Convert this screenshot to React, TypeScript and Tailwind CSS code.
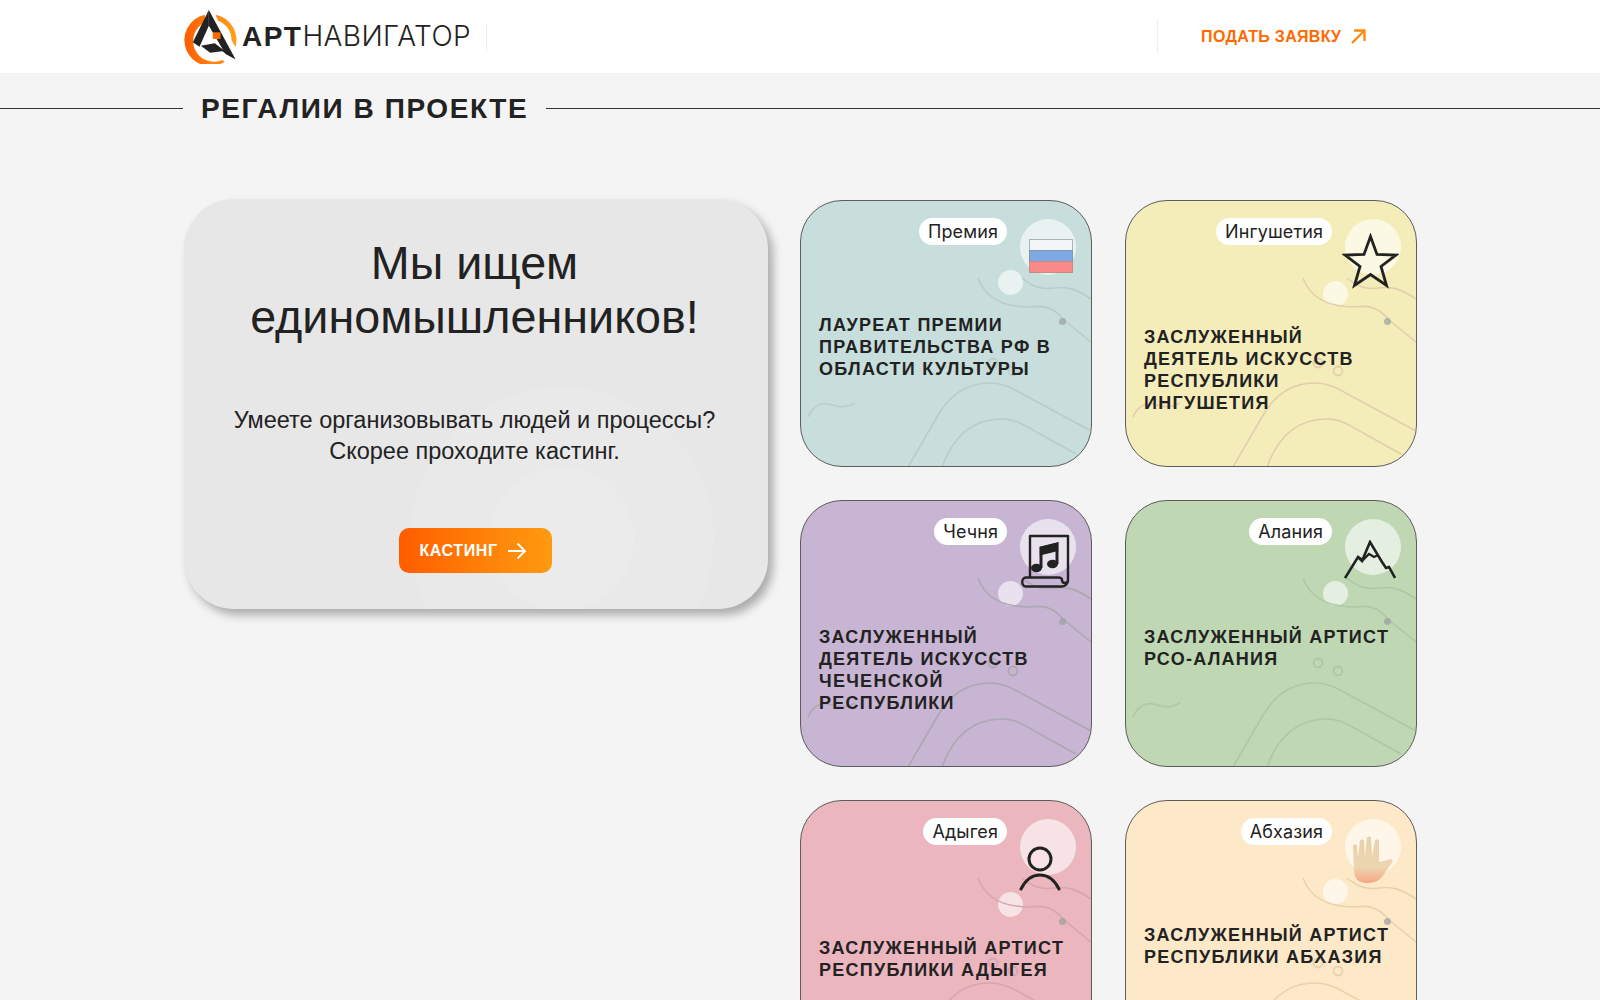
import type { ReactNode } from 'react'

type Regalia = {
  tag: string
  title: string
  bg: string
  line: string
  titleGap: string
  dotTop: string
  icon: ReactNode
}

function FlagIcon() {
  return (
    <svg className="absolute left-[228px] top-[38px]" width="44" height="34" viewBox="0 0 44 34">
      <rect x="0.5" y="0.5" width="43" height="11" fill="#f2f6f8" stroke="#a9b5b5" />
      <rect x="0.5" y="11.5" width="43" height="11" fill="#7fa9e4" stroke="#8296a8" />
      <rect x="0.5" y="22.5" width="43" height="11" fill="#f78a88" stroke="#c98a80" />
    </svg>
  )
}

function StarIcon() {
  return (
    <svg className="absolute left-[216px] top-[32px]" width="57" height="56" viewBox="0 0 57 56" fill="none">
      <path d="M28.5 3.5 L35 21.5 L54 22 L39 33.5 L44.5 52.5 L28.5 41.5 L12.5 52.5 L18 33.5 L3 22 L22 21.5 Z" stroke="#222" strokeWidth="2.8" strokeLinejoin="miter" />
    </svg>
  )
}

function ScoreIcon() {
  return (
    <svg className="absolute left-[220px] top-[33px]" width="50" height="54" viewBox="0 0 50 54" fill="none" stroke="#222" strokeWidth="2.4">
      <path d="M9 44 V2 H47 V46 C47 50 41 50 41 46 C41 44 39 43.5 37 43.5 H5 C0 43.5 0 52.5 5 52.5 H41 C44 52.5 47 50 47 46" strokeLinejoin="round" />
      <path d="M20 34 V14 L36 10 V30" strokeWidth="3" />
      <path d="M20 14 L36 10 V16 L20 20 Z" fill="#222" />
      <ellipse cx="15.5" cy="34" rx="5.5" ry="4.2" fill="#222" stroke="none" />
      <ellipse cx="31.5" cy="30" rx="5.5" ry="4.2" fill="#222" stroke="none" />
    </svg>
  )
}

function MountainIcon() {
  return (
    <svg className="absolute left-[218px] top-[39px]" width="52" height="40" viewBox="0 0 52 40" fill="none" stroke="#222" strokeWidth="2.6" strokeLinejoin="miter">
      <path d="M1 38 L14 17 L18 21 L26 2 L38 22 L42 28 L45 27 L51 38" />
      <path d="M14 17 L19 20 L25 14 L30 17 L34 15" strokeWidth="2.2" />
    </svg>
  )
}

function PersonIcon() {
  return (
    <svg className="absolute left-[218px] top-[45px]" width="44" height="46" viewBox="0 0 44 46" fill="none" stroke="#222" strokeWidth="3" strokeLinecap="round">
      <circle cx="21" cy="13" r="11" />
      <path d="M2 43 C8 31 15 29 21 29 C27 29 34 31 40 43" />
    </svg>
  )
}

function HandIcon() {
  return (
    <svg className="absolute left-[226px] top-[35px]" width="42" height="48" viewBox="0 0 42 48">
      <defs>
        <linearGradient id="palm" x1="0" y1="0" x2="0" y2="1">
          <stop offset="0" stopColor="#e8d2ab" />
          <stop offset="0.65" stopColor="#ecd6b2" />
          <stop offset="1" stopColor="#f8a585" />
        </linearGradient>
      </defs>
      <path
        d="M1 10 C1 8 5 8 5 10 L6 21 L8 5 C8 3 12 3 12 5 L13 20 L15 2 C15 0 19 0 19 2 L20 20 L23 5 C23 3 27 3 27 5 L27 26 L36 24 C41 22 42 25 39 28 L32 38 C28 45 22 47 15 47 C6 47 2 42 2 34 Z"
        fill="url(#palm)"
      />
    </svg>
  )
}

const items: Regalia[] = [
  { tag: 'Премия', title: 'ЛАУРЕАТ ПРЕМИИ\nПРАВИТЕЛЬСТВА РФ В\nОБЛАСТИ КУЛЬТУРЫ', bg: 'bg-[#c7dedc]', line: '#bccbc8', titleGap: 'mt-[69px]', dotTop: 'top-[69px]', icon: <FlagIcon /> },
  { tag: 'Ингушетия', title: 'ЗАСЛУЖЕННЫЙ\nДЕЯТЕЛЬ ИСКУССТВ\nРЕСПУБЛИКИ\nИНГУШЕТИЯ', bg: 'bg-[#f4edb9]', line: '#e2ceae', titleGap: 'mt-[81px]', dotTop: 'top-[80px]', icon: <StarIcon /> },
  { tag: 'Чечня', title: 'ЗАСЛУЖЕННЫЙ\nДЕЯТЕЛЬ ИСКУССТВ\nЧЕЧЕНСКОЙ\nРЕСПУБЛИКИ', bg: 'bg-[#c8b5d3]', line: '#aea6b0', titleGap: 'mt-[81px]', dotTop: 'top-[80px]', icon: <ScoreIcon /> },
  { tag: 'Алания', title: 'ЗАСЛУЖЕННЫЙ АРТИСТ\nРСО-АЛАНИЯ', bg: 'bg-[#bfd8b3]', line: '#adc8a6', titleGap: 'mt-[81px]', dotTop: 'top-[80px]', icon: <MountainIcon /> },
  { tag: 'Адыгея', title: 'ЗАСЛУЖЕННЫЙ АРТИСТ\nРЕСПУБЛИКИ АДЫГЕЯ', bg: 'bg-[#ecb6bf]', line: '#d4a6ae', titleGap: 'mt-[92px]', dotTop: 'top-[91px]', icon: <PersonIcon /> },
  { tag: 'Абхазия', title: 'ЗАСЛУЖЕННЫЙ АРТИСТ\nРЕСПУБЛИКИ АБХАЗИЯ', bg: 'bg-[#fde9c8]', line: '#e6d3ae', titleGap: 'mt-[79px]', dotTop: 'top-[78px]', icon: <HandIcon /> },
]

function Logo() {
  return (
    <svg width="53" height="55" viewBox="26 25 158 165">
      <defs>
        <linearGradient id="ring" gradientUnits="userSpaceOnUse" x1="27" y1="118" x2="183" y2="118">
          <stop offset="0" stopColor="#ff5e00" />
          <stop offset="1" stopColor="#ffa01e" />
        </linearGradient>
      </defs>
      <path d="M88 42 A78 78 0 1 0 148 183 L140 178 A62 62 0 0 1 90 64 Z" fill="url(#ring)" />
      <path d="M120 42 A78 78 0 0 1 180 140 L168 118 A62 62 0 0 0 128 60 Z" fill="url(#ring)" />
      <path d="M100 28 L52 125 L72 138 L100 75 Z" fill="#222" />
      <path d="M100 28 L180 176 L150 160 L100 75 Z" fill="#222" />
      <path d="M76 135 L118 128 L180 176 L140 152 L104 156 Z" fill="#222" />
      <rect x="112" y="95" width="23" height="20" fill="#ff6a00" />
    </svg>
  )
}

function RegaliaCard({ item }: { item: Regalia }) {
  return (
    <article className={`relative h-[267px] w-[292px] overflow-hidden rounded-[42px] border border-[#5c5c5c] ${item.bg}`}>
      <div className="absolute right-[15px] top-[18px] h-[56px] w-[56px] rounded-full bg-white/60" />
      <div className={`absolute right-[68px] h-[25px] w-[25px] rounded-full bg-white/60 ${item.dotTop}`} />
      <svg className="absolute -left-px -top-px" width="292" height="267" viewBox="0 0 292 267" fill="none" stroke={item.line} strokeWidth="1.6">
        <path d="M178 78 C186 100 205 107 230 107 C250 104 258 113 264 120 L291 142" />
        <path d="M222 78 C232 86 240 90 254 88 C268 86 278 90 291 99" />
        <path d="M108 267 L137 217 C148 197 165 183 190 183 C205 183 215 190 230 198 L291 231" />
        <path d="M142 267 C150 245 165 220 200 219 C215 218 225 226 240 234 L276 254" />
        <path d="M8 217 C14 204 22 202 32 205 C42 208 48 207 55 203" />
        <circle cx="193" cy="163" r="4.5" strokeWidth="1.8" />
        <circle cx="213" cy="171" r="4.5" strokeWidth="1.8" />
      </svg>
      <div className="absolute left-[258px] top-[117px] h-[7px] w-[7px] rounded-full bg-[#9aa0a0]/70" />
      {item.icon}
      <div className="relative flex justify-end pr-[84px] pt-[17px]">
        <span className="flex h-[27px] items-center rounded-full bg-white px-[9px] pt-px text-[18px] leading-none tracking-[0.1px] text-[#222] [font-family:'Inter',sans-serif]">
          {item.tag}
        </span>
      </div>
      <h3 className={`relative whitespace-pre-line pl-[18px] text-[18px] font-bold leading-[22px] tracking-[1.27px] text-[#222] ${item.titleGap}`}>
        {item.title}
      </h3>
    </article>
  )
}

export default function App() {
  return (
    <div className="h-[1000px] overflow-hidden bg-[#f4f4f4] [font-family:'Liberation_Sans',Arial,sans-serif]">
      <header className="flex h-[73px] items-center bg-white pl-[184px]">
        <Logo />
        <div className="ml-[5px] flex items-baseline text-[28px] leading-none text-[#222]">
          <span className="font-bold tracking-[1.6px]">АРТ</span>
          <span className="font-light tracking-[0.4px] [font-family:'Inter',sans-serif]">НАВИГАТОР</span>
        </div>
        <div className="ml-[15px] h-[28px] w-px bg-[#eee]" />
        <div className="ml-[670px] h-[35px] w-px bg-[#eee]" />
        <a className="ml-[43px] flex items-center gap-[10px] text-[16px] font-bold tracking-[0.3px] text-[#ff6a00]">
          ПОДАТЬ ЗАЯВКУ
          <svg width="15" height="15" viewBox="0 0 15 15" fill="none" stroke="#ff8a10" strokeWidth="2.4">
            <path d="M1 14 L13.5 1.5 M3 1.5 H13.5 V12" />
          </svg>
        </a>
      </header>

      <div className="flex h-[70px] items-center">
        <div className="h-px w-[183px] bg-[#333]" />
        <h2 className="px-[18px] pt-px text-[28px] font-bold leading-none tracking-[1.6px] text-[#222]">РЕГАЛИИ В ПРОЕКТЕ</h2>
        <div className="h-px flex-1 bg-[#333]" />
      </div>

      <main className="flex gap-[32px] pl-[184px] pt-[56px]">
        <section className="relative h-[410px] w-[584px] overflow-hidden rounded-[50px] bg-[#e7e7e7] text-center text-[#222] shadow-[5px_6px_10px_rgba(0,0,0,0.3)]">
          <div className="absolute left-[226px] top-[188px] h-[304px] w-[304px] rounded-full bg-[#e9e9e9]" />
          <div className="absolute left-[306px] top-[268px] h-[144px] w-[144px] rounded-full bg-[#ebebeb]" />
          <div className="relative flex flex-col items-center pt-[37px]">
            <h1 className="pr-[3px] text-[46.7px] font-normal leading-[54px]">Мы ищем<br />единомышленников!</h1>
            <p className="mt-[61px] pr-[3px] text-[23.5px] leading-[31px]">Умеете организовывать людей и процессы?<br />Скорее проходите кастинг.</p>
            <button className="mr-[2px] mt-[61px] flex h-[45px] w-[153px] items-center justify-center gap-[9px] rounded-[10px] bg-gradient-to-r from-[#ff5c00] to-[#ff9a10] pr-[4px] text-[16px] font-bold tracking-[0.6px] text-white">
              КАСТИНГ
              <svg width="20" height="18" viewBox="0 0 20 18" fill="none" stroke="#fff" strokeWidth="1.8">
                <path d="M1 9 H18 M10.5 1.5 L18 9 L10.5 16.5" />
              </svg>
            </button>
          </div>
        </section>
        <div className="grid grid-cols-[292px_292px] gap-x-[33px] gap-y-[33px] pt-px">
          {items.map((item) => (
            <RegaliaCard key={item.tag} item={item} />
          ))}
        </div>
      </main>
    </div>
  )
}
